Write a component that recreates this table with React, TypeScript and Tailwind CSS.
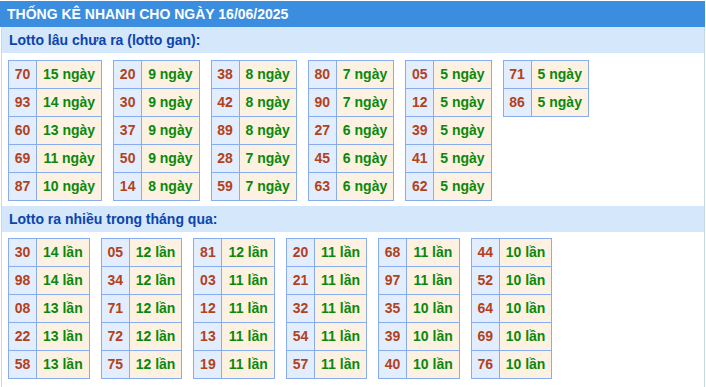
import React from 'react';

type Row = [string, string];

const ganTables: Row[][] = [
  [['70', '15 ngày'], ['93', '14 ngày'], ['60', '13 ngày'], ['69', '11 ngày'], ['87', '10 ngày']],
  [['20', '9 ngày'], ['30', '9 ngày'], ['37', '9 ngày'], ['50', '9 ngày'], ['14', '8 ngày']],
  [['38', '8 ngày'], ['42', '8 ngày'], ['89', '8 ngày'], ['28', '7 ngày'], ['59', '7 ngày']],
  [['80', '7 ngày'], ['90', '7 ngày'], ['27', '6 ngày'], ['45', '6 ngày'], ['63', '6 ngày']],
  [['05', '5 ngày'], ['12', '5 ngày'], ['39', '5 ngày'], ['41', '5 ngày'], ['62', '5 ngày']],
  [['71', '5 ngày'], ['86', '5 ngày']],
];

const nhieuTables: Row[][] = [
  [['30', '14 lần'], ['98', '14 lần'], ['08', '13 lần'], ['22', '13 lần'], ['58', '13 lần']],
  [['05', '12 lần'], ['34', '12 lần'], ['71', '12 lần'], ['72', '12 lần'], ['75', '12 lần']],
  [['81', '12 lần'], ['03', '11 lần'], ['12', '11 lần'], ['13', '11 lần'], ['19', '11 lần']],
  [['20', '11 lần'], ['21', '11 lần'], ['32', '11 lần'], ['54', '11 lần'], ['57', '11 lần']],
  [['68', '11 lần'], ['97', '11 lần'], ['35', '10 lần'], ['39', '10 lần'], ['40', '10 lần']],
  [['44', '10 lần'], ['52', '10 lần'], ['64', '10 lần'], ['69', '10 lần'], ['76', '10 lần']],
];

function StatTable({ rows }: { rows: Row[] }) {
  return (
    <div className="grid grid-cols-[auto_auto] w-max border-l border-t border-[#88adef]">
      {rows.map(([num, val]) => (
        <React.Fragment key={num}>
          <div className="h-[28px] w-[28px] flex items-center justify-center bg-[#e2eefd] border-r border-b border-[#88adef] text-[#b3411c]">
            {num}
          </div>
          <div className="h-[28px] px-[6px] flex items-center justify-center bg-[#fdf2e2] border-r border-b border-[#88adef] text-[#0b880b]">
            {val}
          </div>
        </React.Fragment>
      ))}
    </div>
  );
}

function SubHeader({ children }: { children: React.ReactNode }) {
  return (
    <div className="h-[26px] flex items-center px-[7px] bg-[#d4e7fb] text-[#0c44ae] text-[14px] font-bold">
      {children}
    </div>
  );
}

export default function App() {
  return (
    <div className="w-[706px] h-[387px] bg-white pt-[1px] font-['Liberation_Sans',Arial,sans-serif] font-bold text-[14px]">
      {/* Header bar */}
      <div className="h-[26px] w-[705px] flex items-center px-[7px] bg-[#3b8ddf] text-white text-[14px] font-bold">
        THỐNG KÊ NHANH CHO NGÀY 16/06/2025
      </div>

      <div className="ml-[1px] w-[704px] h-[360px] border-l border-r border-[#c9d7ea]">
        <SubHeader>Lotto lâu chưa ra (lotto gan):</SubHeader>
        <div className="flex items-start gap-[11px] pl-[6px] pt-[7px] pb-[5px]">
          {ganTables.map((rows, i) => (
            <StatTable key={i} rows={rows} />
          ))}
        </div>

        <SubHeader>Lotto ra nhiều trong tháng qua:</SubHeader>
        <div className="flex items-start gap-[11px] pl-[6px] pt-[6px]">
          {nhieuTables.map((rows, i) => (
            <StatTable key={i} rows={rows} />
          ))}
        </div>
      </div>
    </div>
  );
}
